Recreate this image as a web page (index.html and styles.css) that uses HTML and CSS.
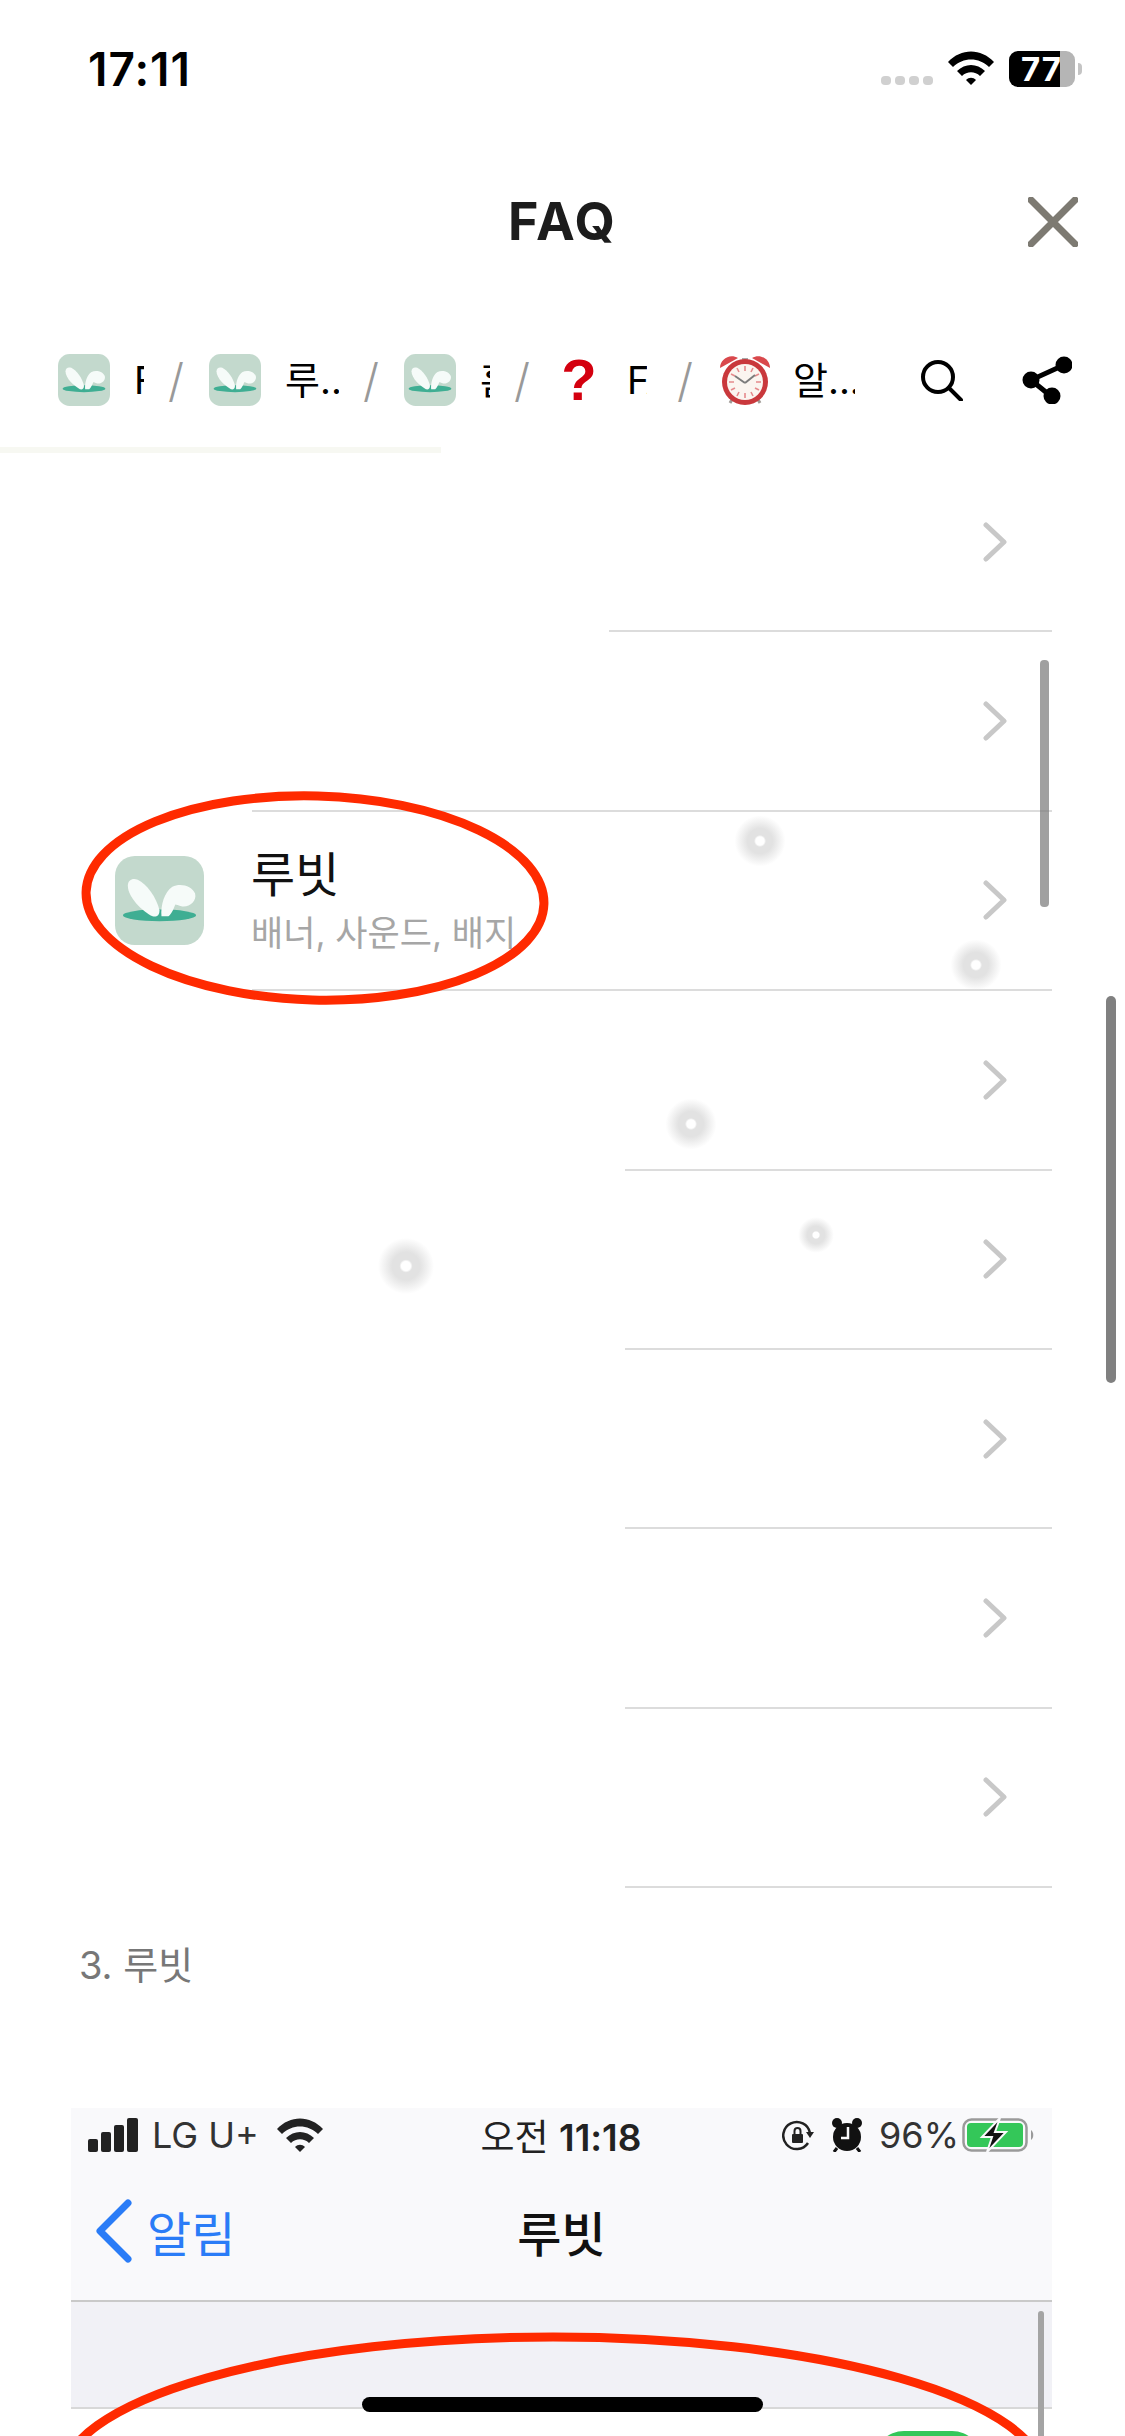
FILE: index.html

```html
<!DOCTYPE html>
<html lang="ko">
<head>
    <meta charset="UTF-8">
    <meta name="viewport" content="width=device-width, initial-scale=1.0">
    <title>FAQ</title>
    <link rel="stylesheet" href="styles.css">
</head>
<body>
    <svg class="defs" width="0" height="0">
        <symbol id="rabbit" viewBox="0 0 90 90">
            <rect width="90" height="90" rx="20" fill="#c3d9cd"/>
            <ellipse cx="45" cy="60" rx="37" ry="6" fill="#3fae93"/>
            <path d="M13 30C13 24 18 22 23 24 32 28 42 42 45 55 45 60 42 62 38 61 28 56 13 42 13 30z" fill="#f6fbf9"/>
            <path d="M47 61C46 50 50 36 58 31 66 27 78 30 81 38 83 46 75 52 68 51 64 50 62 49 61 49 59 54 57 59 54 61z" fill="#f6fbf9"/>
        </symbol>
    </svg>

    <div class="page">
        <div class="status-bar">
            <span class="clock">17:11</span>
            <div class="status-right">
                <div class="signal-dots"><i></i><i></i><i></i><i></i></div>
                <svg class="wifi" viewBox="0 0 46 34">
                    <path d="M0 11C13-3 33-3 46 11l-5 5C31 6 15 6 5 16z"/>
                    <path d="M9 20c8-8 20-8 28 0l-5 5c-5-5-13-5-18 0z"/>
                    <path d="M18 29c3-3 7-3 10 0l-5 5z"/>
                </svg>
                <div class="battery"><span class="battery-level">77</span><span class="battery-rest"></span><span class="battery-nub"></span></div>
            </div>
        </div>

        <div class="title-bar">
            <span></span>
            <h1>FAQ</h1>
            <svg class="close" viewBox="0 0 50 50"><path d="M3 3l44 44M47 3L3 47"/></svg>
        </div>

        <div class="crumbs">
            <svg class="crumb-icon"><use href="#rabbit"/></svg>
            <span class="crumb-label clip">FAQ</span>
            <span class="slash">/</span>
            <svg class="crumb-icon"><use href="#rabbit"/></svg>
            <span class="crumb-label short">루..</span>
            <span class="slash">/</span>
            <svg class="crumb-icon"><use href="#rabbit"/></svg>
            <span class="crumb-label clip">홈</span>
            <span class="slash">/</span>
            <span class="question">?</span>
            <span class="crumb-label mid">FAQ</span>
            <span class="slash">/</span>
            <svg class="clock-icon" viewBox="0 0 54 54">
                <path d="M12 50l4-7M42 50l-4-7" stroke="#a09a96" stroke-width="3"/>
                <path d="M24 5h6v6h-6z" fill="#a9a9a9"/>
                <path d="M2 15C2 6 12 0 20 5z" fill="#d9484c"/>
                <path d="M52 15C52 6 42 0 34 5z" fill="#d9484c"/>
                <circle cx="27" cy="29" r="23" fill="#c9383c"/>
                <circle cx="27" cy="29" r="18" fill="#fbf5f0"/>
                <path d="M27 13v5M27 40v5M11 29h5M38 29h5M19 15l2 4M35 15l-2 4M19 43l2-4M35 43l-2-4M13 21l4 2M41 21l-4 2M13 37l4-2M41 37l-4-2" stroke="#e58a8c" stroke-width="1.6"/>
                <path d="M27 30l-10-7M27 30l10-8" stroke="#7c7c7c" stroke-width="2" fill="none"/>
            </svg>
            <span class="crumb-label wide">알...</span>
            <svg class="search" viewBox="0 0 43 42"><circle cx="18" cy="18" r="15"/><path d="M29 29l12 12"/></svg>
            <svg class="share" viewBox="0 0 50 48">
                <path d="M42 9L9 24l21 17" fill="none" stroke="#000" stroke-width="5"/>
                <circle cx="42" cy="9" r="8.5"/><circle cx="9" cy="24" r="8.5"/><circle cx="30" cy="40" r="8.5"/>
            </svg>
        </div>
        <div class="progress"></div>

        <div class="list">
            <div class="row"><div class="row-body inset-a"><svg class="chevron" viewBox="0 0 24 40"><path d="M3 3l18 17L3 37"/></svg></div></div>
            <div class="row"><div class="row-body inset-b"><svg class="chevron" viewBox="0 0 24 40"><path d="M3 3l18 17L3 37"/></svg></div></div>
            <div class="row">
                <svg class="app-icon"><use href="#rabbit"/></svg>
                <div class="row-body">
                    <div class="row-text">
                        <div class="row-title">루빗</div>
                        <div class="row-sub">배너, 사운드, 배지</div>
                    </div>
                    <svg class="chevron" viewBox="0 0 24 40"><path d="M3 3l18 17L3 37"/></svg>
                </div>
            </div>
            <div class="row"><div class="row-body inset-c"><svg class="chevron" viewBox="0 0 24 40"><path d="M3 3l18 17L3 37"/></svg></div></div>
            <div class="row"><div class="row-body inset-c"><svg class="chevron" viewBox="0 0 24 40"><path d="M3 3l18 17L3 37"/></svg></div></div>
            <div class="row"><div class="row-body inset-c"><svg class="chevron" viewBox="0 0 24 40"><path d="M3 3l18 17L3 37"/></svg></div></div>
            <div class="row"><div class="row-body inset-c"><svg class="chevron" viewBox="0 0 24 40"><path d="M3 3l18 17L3 37"/></svg></div></div>
            <div class="row"><div class="row-body inset-c"><svg class="chevron" viewBox="0 0 24 40"><path d="M3 3l18 17L3 37"/></svg></div></div>
        </div>

        <p class="caption">3. 루빗</p>

        <div class="shot">
            <div class="shot-status">
                <div class="shot-left">
                    <svg class="shot-signal" viewBox="0 0 50 34">
                        <rect x="0" y="21" width="10" height="13" rx="2"/>
                        <rect x="13" y="14" width="10" height="20" rx="2"/>
                        <rect x="26" y="7" width="10" height="27" rx="2"/>
                        <rect x="39" y="0" width="11" height="34" rx="2"/>
                    </svg>
                    <span>LG U+</span>
                    <svg class="shot-wifi" viewBox="0 0 46 34">
                        <path d="M0 11C13-3 33-3 46 11l-5 5C31 6 15 6 5 16z"/>
                        <path d="M9 20c8-8 20-8 28 0l-5 5c-5-5-13-5-18 0z"/>
                        <path d="M18 29c3-3 7-3 10 0l-5 5z"/>
                    </svg>
                </div>
                <span class="shot-time">오전 <b>11:18</b></span>
                <div class="shot-right">
                    <svg class="shot-lock" viewBox="0 0 32 32">
                        <path d="M26 24a13.5 13.5 0 1 1 2-10" fill="none" stroke="#222" stroke-width="2.5"/>
                        <path d="M24 13h8l-4 6z" fill="#222"/>
                        <rect x="10" y="15" width="11" height="9" rx="1" fill="#222"/>
                        <path d="M12.5 15v-3a3 3 0 0 1 6 0v3" fill="none" stroke="#222" stroke-width="2"/>
                    </svg>
                    <svg class="shot-alarm" viewBox="0 0 32 34">
                        <circle cx="6" cy="5" r="5"/><circle cx="26" cy="5" r="5"/>
                        <path d="M6 30l-3 4M26 30l3 4" stroke="#111" stroke-width="3"/>
                        <circle cx="16" cy="19" r="14"/>
                        <path d="M17 9v11h-7" fill="none" stroke="#f9f9fb" stroke-width="2.5"/>
                    </svg>
                    <span>96%</span>
                    <svg class="shot-battery" viewBox="0 0 72 36">
                        <rect x="1.5" y="2.5" width="63" height="31" rx="8" fill="none" stroke="#9a9a9a" stroke-width="2.5"/>
                        <rect x="5" y="6" width="56" height="24" rx="4" fill="#34c759"/>
                        <path d="M69 13c3 2 3 8 0 10z" fill="#9a9a9a"/>
                        <path d="M38 1L20 20h10l-5 15 19-20H33z" fill="#111" stroke="#f9f9fb" stroke-width="2"/>
                    </svg>
                </div>
            </div>
            <div class="shot-nav">
                <div class="shot-back">
                    <svg class="shot-chevron" viewBox="0 0 38 64"><path d="M33 4L5 32l28 28"/></svg>
                    <span>알림</span>
                </div>
                <span class="shot-title">루빗</span>
                <span></span>
            </div>
            <div class="shot-band"></div>
            <div class="shot-cell"><span class="toggle"></span></div>
            <span class="shot-scroll"></span>
        </div>

        <!-- annotations and touch marks lying over the page -->
        <svg class="ring ring-top" viewBox="0 0 470 216"><ellipse cx="235" cy="108" rx="229" ry="102" transform="rotate(1.5 235 108)"/></svg>
        <svg class="ring ring-bottom" viewBox="0 0 1010 320"><ellipse cx="505" cy="160" rx="490" ry="140"/></svg>

        <span class="touch t1"></span>
        <span class="touch t2"></span>
        <span class="touch t3"></span>
        <span class="touch t4"></span>
        <span class="touch t5"></span>

        <span class="scroll-inner"></span>
        <span class="scroll-page"></span>
        <span class="home-bar"></span>
    </div>
</body>
</html>
```

FILE: styles.css

```css
:root {
    --ink: #000;
    --line: #dcdcdc;
    --chevron: #c8c8c8;
    --red: #ff2a00;
    --kr: Inter, "Noto Sans CJK KR", sans-serif;
}

* {
    box-sizing: border-box;
    margin: 0;
    padding: 0;
}

body {
    font-family: var(--kr);
    background: #fff;
    color: var(--ink);
}

.defs {
    position: absolute;
}

.page {
    position: relative;
    width: 1125px;
    height: 2436px;
    overflow: hidden;
    background: #fff;
}

/* status bar */
.status-bar {
    height: 100px;
    padding: 51px 43px 0 88px;
    display: flex;
    justify-content: space-between;
}

.clock {
    font-size: 46px;
    font-weight: 600;
    line-height: 36px;
    letter-spacing: 1px;
}

.status-right {
    display: flex;
    gap: 15px;
    height: 36px;
}

.signal-dots {
    display: flex;
    gap: 4px;
    align-items: flex-end;
    padding-bottom: 2px;
}

.signal-dots i {
    width: 10px;
    height: 9px;
    border-radius: 4px;
    background: #d0d0d0;
}

.wifi {
    width: 46px;
    height: 34px;
    fill: #000;
}

.battery {
    display: flex;
    align-items: center;
    width: 73px;
    height: 36px;
}

.battery-level {
    width: 51px;
    height: 36px;
    padding-left: 12px;
    background: #000;
    color: #fff;
    border-radius: 9px 0 0 9px;
    font-size: 33px;
    font-weight: 700;
    line-height: 36px;
    letter-spacing: 1px;
}

.battery-rest {
    width: 15px;
    height: 36px;
    background: #b5b5b5;
    border-radius: 0 9px 9px 0;
}

.battery-nub {
    width: 4px;
    height: 12px;
    margin-left: 3px;
    background: #c4c4c4;
    border-radius: 0 6px 6px 0;
}

/* title */
.title-bar {
    margin-top: 92px;
    height: 60px;
    padding: 0 47px;
    display: grid;
    grid-template-columns: 1fr auto 1fr;
    align-items: center;
}

h1 {
    font-size: 52px;
    font-weight: 700;
    line-height: 60px;
    letter-spacing: 2px;
    color: #1c1c1c;
}

.close {
    justify-self: end;
    width: 50px;
    height: 50px;
    fill: none;
    stroke: #7d7a72;
    stroke-width: 7;
    stroke-linecap: round;
}

/* breadcrumb */
.crumbs {
    margin-top: 98px;
    height: 60px;
    padding: 0 53px 0 58px;
    display: flex;
    align-items: center;
}

.crumb-icon {
    flex: none;
    width: 52px;
    height: 52px;
    margin-right: 24px;
}

.crumb-label {
    flex: none;
    height: 50px;
    margin-right: 24px;
    overflow: hidden;
    white-space: nowrap;
    font-size: 38px;
    line-height: 50px;
}

.crumb-label.clip {
    width: 10px;
}

.crumb-label.short {
    width: 54px;
}

.crumb-label.mid {
    width: 20px;
    margin-right: 30px;
}

.crumb-label.wide {
    width: 62px;
}

.slash {
    flex: none;
    width: 14px;
    margin-right: 27px;
    color: #999;
    font-size: 46px;
    font-weight: 300;
    line-height: 50px;
    text-align: center;
}

.question {
    flex: none;
    width: 48px;
    margin-right: 24px;
    color: #d4000f;
    font-family: "Liberation Sans", sans-serif;
    font-size: 58px;
    font-weight: 700;
    line-height: 56px;
    text-align: center;
}

.clock-icon {
    flex: none;
    width: 54px;
    height: 54px;
    margin-right: 21px;
}

.search {
    flex: none;
    width: 43px;
    height: 42px;
    margin-left: auto;
    fill: none;
    stroke: #000;
    stroke-width: 4;
    stroke-linecap: round;
}

.share {
    flex: none;
    width: 50px;
    height: 48px;
    margin-left: 59px;
}

.progress {
    width: 441px;
    height: 6px;
    margin-top: 37px;
    background: #f7f8f2;
}

/* list */
.row {
    height: 179.4px;
    display: flex;
}

.row-body {
    flex: 1;
    margin-right: 73px;
    padding-right: 45px;
    display: flex;
    align-items: center;
    justify-content: space-between;
    border-bottom: 2px solid var(--line);
}

.inset-a {
    margin-left: 609px;
    justify-content: flex-end;
}

.inset-b {
    margin-left: 252px;
    justify-content: flex-end;
}

.inset-c {
    margin-left: 625px;
    justify-content: flex-end;
}

.chevron {
    width: 24px;
    height: 40px;
    fill: none;
    stroke: var(--chevron);
    stroke-width: 5;
    stroke-linecap: round;
    stroke-linejoin: round;
}

.app-icon {
    flex: none;
    width: 89px;
    height: 89px;
    margin: 44px 48px 0 115px;
}

.row-title {
    font-size: 48px;
    line-height: 60px;
    color: #111;
    margin-left: -1px;
}

.row-sub {
    margin-top: 6px;
    margin-left: -1px;
    font-size: 35px;
    line-height: 44px;
    color: #a6a6a6;
}

.caption {
    margin: 49px 0 0 79px;
    font-size: 38px;
    line-height: 56px;
    color: #777;
}

/* pasted screenshot */
.shot {
    position: relative;
    width: 981px;
    margin: 115px 0 0 71px;
    background: #fff;
}

.shot-status {
    height: 54px;
    padding: 0 18px 0 17px;
    background: #f9f9fb;
    display: grid;
    grid-template-columns: 1fr auto 1fr;
    align-items: center;
    font-size: 36px;
    color: #333;
}

.shot-left,
.shot-right {
    display: flex;
    align-items: center;
}

.shot-right {
    justify-content: flex-end;
}

.shot-signal {
    width: 50px;
    height: 34px;
    margin-right: 14px;
    fill: #222;
}

.shot-wifi {
    width: 46px;
    height: 34px;
    margin-left: 18px;
    fill: #222;
}

.shot-time {
    color: #222;
    font-size: 37px;
}

.shot-time b {
    font-weight: 600;
}

.shot-lock {
    width: 32px;
    height: 32px;
    margin-right: 17px;
}

.shot-alarm {
    width: 32px;
    height: 34px;
    margin-right: 16px;
    fill: #111;
}

.shot-battery {
    width: 72px;
    height: 36px;
    margin-left: 3px;
}

.shot-nav {
    height: 140px;
    background: #f9f9fb;
    border-bottom: 2px solid #c9c9c9;
    display: grid;
    grid-template-columns: 1fr auto 1fr;
    align-items: center;
    font-size: 48px;
}

.shot-back {
    padding-left: 24px;
    display: flex;
    align-items: center;
    gap: 14px;
    color: #2a7cf7;
}

.shot-chevron {
    width: 38px;
    height: 64px;
    fill: none;
    stroke: #2a7cf7;
    stroke-width: 7;
    stroke-linecap: round;
    stroke-linejoin: round;
}

.shot-title {
    font-weight: 500;
    color: #111;
}

.shot-band {
    height: 107px;
    background: #f1f1f6;
    border-bottom: 2px solid #d8d8d8;
}

.shot-cell {
    height: 60px;
    padding: 22px 70px 0 0;
    display: flex;
    justify-content: flex-end;
}

.toggle {
    width: 108px;
    height: 60px;
    background: #34c759;
    border-radius: 30px;
}

.shot-scroll {
    position: absolute;
    top: 203px;
    right: 8px;
    width: 6px;
    height: 200px;
    background: #a4a4a4;
    border-radius: 3px;
}

/* overlays */
.ring {
    position: absolute;
    fill: none;
    stroke: var(--red);
    stroke-width: 9;
}

.ring-top {
    left: 80px;
    top: 790px;
    width: 470px;
    height: 216px;
}

.ring-bottom {
    left: 48px;
    top: 2317px;
    width: 1010px;
    height: 320px;
}

.touch {
    position: absolute;
    width: 60px;
    height: 60px;
    border-radius: 50%;
    background: radial-gradient(circle closest-side, #fff 0 14%, #e2e2e2 20% 42%, rgba(226, 226, 226, 0) 85%);
    transform: translate(-50%, -50%);
}

.t1 { left: 760px; top: 841px; }
.t2 { left: 976px; top: 965px; }
.t3 { left: 691px; top: 1124px; }
.t4 { left: 816px; top: 1235px; width: 42px; height: 42px; }
.t5 { left: 406px; top: 1266px; width: 66px; height: 66px; }

.scroll-inner {
    position: absolute;
    left: 1040px;
    top: 660px;
    width: 9px;
    height: 247px;
    background: rgba(120, 120, 120, 0.7);
    border-radius: 4px;
}

.scroll-page {
    position: absolute;
    left: 1106px;
    top: 996px;
    width: 10px;
    height: 387px;
    background: #808080;
    border-radius: 5px;
}

.home-bar {
    position: absolute;
    left: 362px;
    top: 2397px;
    width: 401px;
    height: 15px;
    background: #000;
    border-radius: 8px;
}
```
